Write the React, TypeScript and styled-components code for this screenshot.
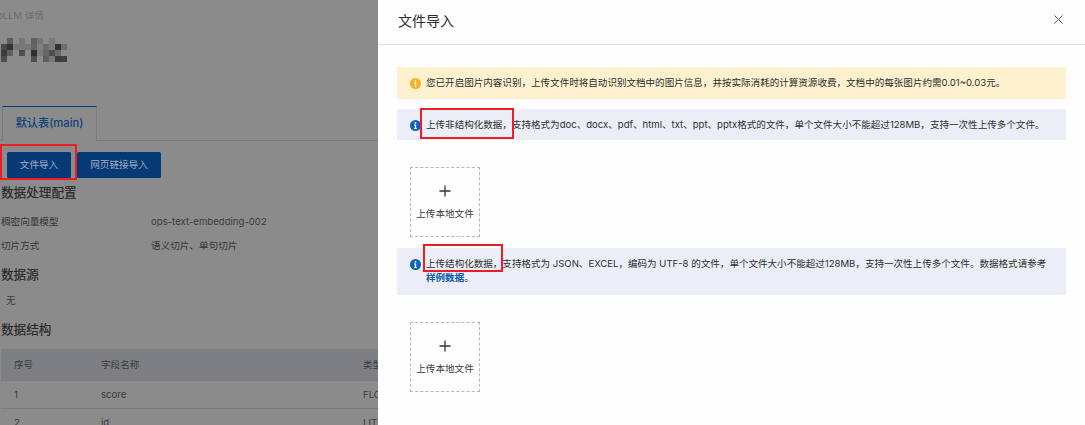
import React from "react";
import styled, { createGlobalStyle } from "styled-components";

const Global = createGlobalStyle`
  html, body { margin: 0; padding: 0; background: #fff; }
  #root { width: 1085px; height: 425px; overflow: hidden; }
  * { box-sizing: border-box; }
`;

const FONT = `Inter, "Noto Sans CJK SC", sans-serif`;

const Screen = styled.div`
  display: grid;
  grid-template-columns: 378px 707px;
  width: 1085px;
  height: 425px;
  overflow: hidden;
  font-family: ${FONT};
`;

const Backdrop = styled.section`
  position: relative;
  background: #8b8b8b;
  color: #2e2e2e;
  height: 425px;
  overflow: hidden;
`;

const Crumb = styled.div`
  padding-top: 9px;
  height: 38px;
  margin-left: -3px;
  font-size: 9.55px;
  line-height: 14px;
  color: #6c6c6c;
`;

const Mosaic = styled.svg`
  display: block;
  width: 66px;
  height: 24px;
  margin-left: 1px;
`;

const TabBar = styled.div`
  display: flex;
  margin-top: 44px;
  height: 35px;
  border-bottom: 1px solid #7b7b7b;
`;

const Tab = styled.div`
  width: 95px;
  height: 35px;
  margin-left: 2px;
  border-top: 1px solid #003a7e;
  border-left: 1px solid #7b7b7b;
  border-right: 1px solid #7b7b7b;
  background: #8b8b8b;
  color: #0f3f78;
  font-size: 11.2px;
  font-weight: 500;
  line-height: 33px;
  text-align: center;
`;

const Actions = styled.div`
  display: flex;
  gap: 6px;
  margin-top: 11px;
  padding-left: 7px;
`;

const ActionButton = styled.div<{ $w: number }>`
  width: ${(p) => p.$w}px;
  height: 26px;
  border-radius: 1.5px;
  background: #053a77;
  color: #a0adbe;
  font-size: 9.6px;
  line-height: 26px;
  text-align: center;
`;

const Heading = styled.h3<{ $top: number }>`
  margin: ${(p) => p.$top}px 0 0 1px;
  font-size: 12.6px;
  font-weight: 400;
  line-height: 18px;
  color: #262626;
  -webkit-text-stroke: 0.15px #262626;
`;

const ConfigRow = styled.div<{ $top: number }>`
  display: grid;
  grid-template-columns: 150px 1fr;
  margin-top: ${(p) => p.$top}px;
  padding-left: 1px;
  font-size: 9.6px;
  line-height: 14px;
  color: #353535;
`;

const Mono = styled.span`
  color: #3c3c3c;
`;

const NoneText = styled.div`
  margin-top: 10px;
  padding-left: 6px;
  font-size: 9.6px;
  line-height: 14px;
  color: #3c3c3c;
`;

const FieldTable = styled.div`
  margin-top: 10px;
  margin-left: 1px;
`;

const FieldRow = styled.div<{ $head?: boolean }>`
  display: grid;
  grid-template-columns: 87px 262px 30px;
  align-items: center;
  height: ${(p) => (p.$head ? 32 : 28)}px;
  padding-left: 13px;
  padding-bottom: ${(p) => (p.$head ? 2 : 0)}px;
  background: ${(p) => (p.$head ? "#7e7f85" : "transparent")};
  border-bottom: 1px solid #7c7c7c;
  font-size: 9.6px;
  color: ${(p) => (p.$head ? "#3c3c3c" : "#3a3a3a")};
  white-space: nowrap;
`;

const Mark = styled.div`
  position: absolute;
  border: 2px solid #ee1c25;
  pointer-events: none;
`;

const FileImportMark = styled(Mark)`
  left: 0;
  top: 144px;
  width: 77px;
  height: 36px;
`;

const Drawer = styled.section`
  position: relative;
  background: #fefefe;
  height: 425px;
  overflow: hidden;
`;

const DrawerHeader = styled.header`
  display: flex;
  align-items: center;
  justify-content: space-between;
  height: 45px;
  padding: 0 22px 5px 20px;
  border-bottom: 1px solid #e2e3e5;
`;

const DrawerTitle = styled.h2`
  margin: 0;
  font-size: 14px;
  font-weight: 400;
  color: #2b2b2b;
`;

const CloseIcon = styled.svg`
  display: block;
  width: 9px;
  height: 9px;
`;

const DrawerBody = styled.div`
  padding: 22px 19px 0;
`;

const Alert = styled.div<{ $tone: "warn" | "info"; $h: number; $top: number }>`
  display: flex;
  gap: 5px;
  margin-top: ${(p) => p.$top}px;
  height: ${(p) => p.$h}px;
  padding: 9px 16px 0 13px;
  background: ${(p) => (p.$tone === "warn" ? "#fdf1cf" : "#ebeef6")};
  font-size: 9.55px;
  line-height: 13.5px;
  color: #2e2e2e;
`;

const AlertIcon = styled.svg`
  flex: none;
  width: 11px;
  height: 11px;
  margin-top: 1.5px;
`;

const AlertText = styled.div`
  flex: 1;
  min-width: 0;
`;

const SampleLink = styled.a`
  color: #0a5ab0;
  font-weight: 700;
  text-decoration: none;
`;

const Upload = styled.div<{ $top: number; $bottom: number }>`
  display: flex;
  flex-direction: column;
  align-items: center;
  width: 70px;
  height: 70px;
  margin: ${(p) => p.$top}px 0 ${(p) => p.$bottom}px 13px;
  padding-top: 17px;
  border: 1px dashed #b4b7bc;
  font-size: 9.6px;
  line-height: 14px;
  color: #3a3a3a;
`;

const PlusIcon = styled.svg`
  display: block;
  width: 12px;
  height: 12px;
  margin-bottom: 10px;
`;

const UnstructuredMark = styled(Mark)`
  left: 42px;
  top: 108px;
  width: 94px;
  height: 31px;
`;

const StructuredMark = styled(Mark)`
  left: 45px;
  top: 244px;
  width: 80px;
  height: 28px;
`;

const cells: [number, number, string][] = [
  [6, 0, "#5e5e5e"], [18, 0, "#757575"], [30, 0, "#606060"], [36, 0, "#757575"], [48, 0, "#7a7a7a"],
  [0, 6, "#4a4a4a"], [6, 6, "#333333"], [12, 6, "#777777"], [18, 6, "#7a7a7a"], [24, 6, "#777777"], [30, 6, "#636363"], [36, 6, "#808080"], [42, 6, "#6b6b6b"], [48, 6, "#7c7c7c"], [54, 6, "#333333"], [60, 6, "#6e6e6e"],
  [0, 12, "#3c3c3c"], [6, 12, "#5f5f5f"], [18, 12, "#4f4f4f"], [30, 12, "#2f2f2f"], [36, 12, "#7c7c7c"], [42, 12, "#666666"], [48, 12, "#4e4e4e"], [54, 12, "#6b6b6b"],
  [0, 18, "#4d4d4d"], [30, 18, "#4f4f4f"], [42, 18, "#5e5e5e"], [48, 18, "#777777"], [54, 18, "#3c3c3c"], [60, 18, "#3f3f3f"],
];

const WarnGlyph = () => (
  <AlertIcon viewBox="0 0 16 16">
    <circle cx="8" cy="8" r="8" fill="#f5b324" />
    <rect x="7" y="3" width="2" height="7" rx="1" fill="#fff" />
    <circle cx="8" cy="12" r="1.2" fill="#fff" />
  </AlertIcon>
);

const InfoGlyph = () => (
  <AlertIcon viewBox="0 0 16 16">
    <circle cx="8" cy="8" r="8" fill="#0d62bd" />
    <circle cx="8" cy="4.2" r="1.3" fill="#fff" />
    <rect x="7" y="6.6" width="2" height="6.4" fill="#fff" />
    <rect x="5.8" y="6.6" width="2" height="1.2" fill="#fff" />
    <rect x="5.8" y="12" width="4.4" height="1.2" fill="#fff" />
  </AlertIcon>
);

const UploadBox = ({ top, bottom }: { top: number; bottom: number }) => (
  <Upload $top={top} $bottom={bottom}>
    <PlusIcon viewBox="0 0 12 12">
      <path d="M6 0.5V11.5M0.5 6H11.5" stroke="#333" strokeWidth="1.3" fill="none" />
    </PlusIcon>
    上传本地文件
  </Upload>
);

export default function App() {
  return (
    <>
      <Global />
      <Screen>
        <Backdrop>
          <Crumb>oLLM 详情</Crumb>
          <Mosaic viewBox="0 0 66 24">
            {cells.map(([x, y, c]) => (
              <rect key={`${x}-${y}`} x={x} y={y} width="6" height="6" fill={c} />
            ))}
          </Mosaic>
          <TabBar>
            <Tab>默认表(main)</Tab>
          </TabBar>
          <Actions>
            <ActionButton $w={64}>文件导入</ActionButton>
            <ActionButton $w={84}>网页链接导入</ActionButton>
          </Actions>
          <Heading $top={6}>数据处理配置</Heading>
          <ConfigRow $top={13}>
            <span>稠密向量模型</span>
            <Mono>ops-text-embedding-002</Mono>
          </ConfigRow>
          <ConfigRow $top={10}>
            <span>切片方式</span>
            <span>语义切片、单句切片</span>
          </ConfigRow>
          <Heading $top={13}>数据源</Heading>
          <NoneText>无</NoneText>
          <Heading $top={13}>数据结构</Heading>
          <FieldTable>
            <FieldRow $head>
              <span>序号</span>
              <span>字段名称</span>
              <span>类型</span>
            </FieldRow>
            <FieldRow>
              <span>1</span>
              <span>score</span>
              <span>FLOAT</span>
            </FieldRow>
            <FieldRow>
              <span>2</span>
              <span>id</span>
              <span>LITERAL</span>
            </FieldRow>
          </FieldTable>
          <FileImportMark />
        </Backdrop>
        <Drawer>
          <DrawerHeader>
            <DrawerTitle>文件导入</DrawerTitle>
            <CloseIcon viewBox="0 0 9 9">
              <path d="M0.4 0.4L8.6 8.6M8.6 0.4L0.4 8.6" stroke="#444" strokeWidth="0.9" fill="none" />
            </CloseIcon>
          </DrawerHeader>
          <DrawerBody>
            <Alert $tone="warn" $h={32} $top={0}>
              <WarnGlyph />
              <AlertText>
                您已开启图片内容识别，上传文件时将自动识别文档中的图片信息，并按实际消耗的计算资源收费，文档中的每张图片约需0.01~0.03元。
              </AlertText>
            </Alert>
            <Alert $tone="info" $h={31} $top={10}>
              <InfoGlyph />
              <AlertText>
                上传非结构化数据，支持格式为doc、docx、pdf、html、txt、ppt、pptx格式的文件，单个文件大小不能超过128MB，支持一次性上传多个文件。
              </AlertText>
            </Alert>
            <UploadBox top={27} bottom={11} />
            <Alert $tone="info" $h={47} $top={0}>
              <InfoGlyph />
              <AlertText>
                上传结构化数据，支持格式为 JSON、EXCEL，编码为 UTF-8 的文件，单个文件大小不能超过128MB，支持一次性上传多个文件。数据格式请参考
                <SampleLink>样例数据</SampleLink>。
              </AlertText>
            </Alert>
            <UploadBox top={27} bottom={0} />
          </DrawerBody>
          <UnstructuredMark />
          <StructuredMark />
        </Drawer>
      </Screen>
    </>
  );
}
